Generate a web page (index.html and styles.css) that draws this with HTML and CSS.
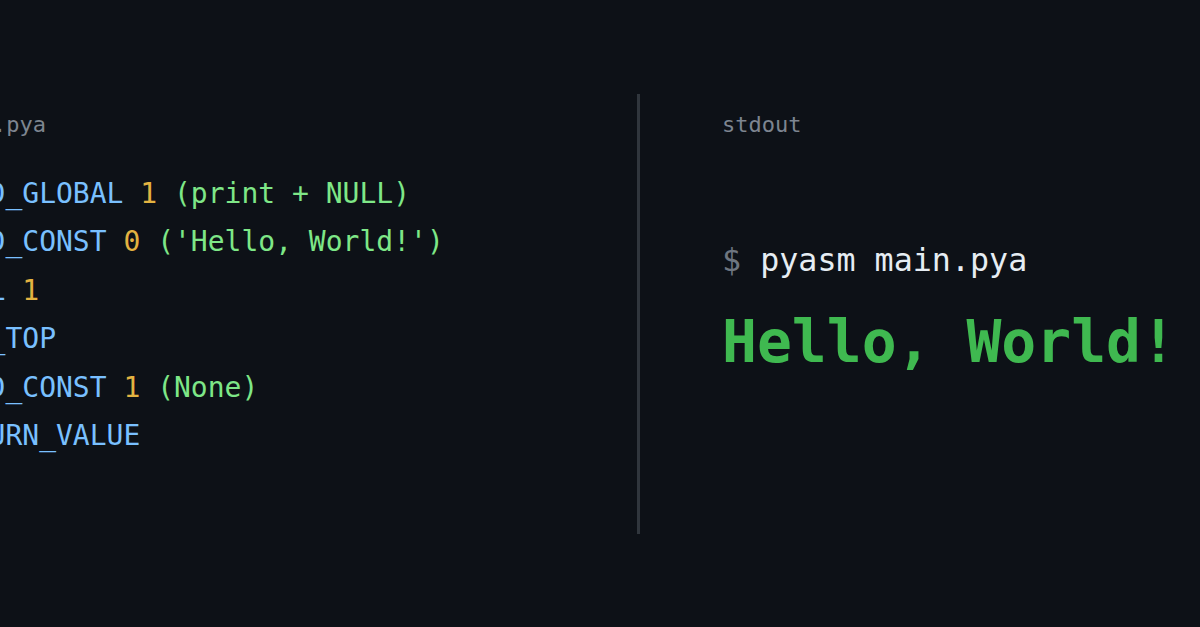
FILE: index.html
```html
<!DOCTYPE html>
<html lang="en">
<head>
<meta charset="utf-8">
<title>pyasm</title>
<link rel="stylesheet" href="styles.css">
</head>
<body>
<main class="stage">
  <section class="pane pane-code">
    <div class="label label-file">main.pya</div>
    <pre class="code"><span class="op">LOAD_GLOBAL</span> <span class="num">1</span> <span class="arg">(print + NULL)</span>
<span class="op">LOAD_CONST</span> <span class="num">0</span> <span class="arg">('Hello, World!')</span>
<span class="op">CALL</span> <span class="num">1</span>
<span class="op">POP_TOP</span>
<span class="op">LOAD_CONST</span> <span class="num">1</span> <span class="arg">(None)</span>
<span class="op">RETURN_VALUE</span></pre>
  </section>
  <div class="divider"></div>
  <section class="pane pane-out">
    <div class="label">stdout</div>
    <div class="cmd"><span class="prompt">$</span> pyasm main.pya</div>
    <div class="result">Hello, World!</div>
  </section>
</main>
</body>
</html>
```

FILE: styles.css
```css
html, body {
  margin: 0;
  padding: 0;
  background: #0d1117;
  width: 1200px;
  height: 627px;
  overflow: hidden;
}

body {
  font-family: "DejaVu Sans Mono", "Liberation Mono", monospace;
}

.stage {
  height: 627px;
  display: flex;
  align-items: center;
}

.pane {
  height: 440px;
  box-sizing: border-box;
  padding-top: 18px;
}

.pane-code {
  margin-left: -62px;
  width: 699px;
  flex: none;
}

.divider {
  width: 3px;
  height: 440px;
  background: #30363d;
  flex: none;
}

.pane-out {
  padding-left: 82px;
  flex: 1;
}

.label {
  font-size: 22px;
  line-height: 26px;
  color: #7d8590;
}

.label-file {
  padding-left: 2px;
}

.code {
  margin: 32px 0 0;
  font-family: inherit;
  font-size: 28px;
  line-height: 48.6px;
  color: #79c0ff;
}

.op { color: #79c0ff; }
.num { color: #e3b341; }
.arg { color: #7ee787; }

.cmd {
  margin-top: 102px;
  font-size: 31.7px;
  line-height: 40px;
  color: #e6edf3;
}

.prompt { color: #6e7681; }

.result {
  margin-top: 27px;
  font-size: 58px;
  line-height: 70px;
  font-weight: bold;
  color: #3fb950;
  white-space: nowrap;
}
```
